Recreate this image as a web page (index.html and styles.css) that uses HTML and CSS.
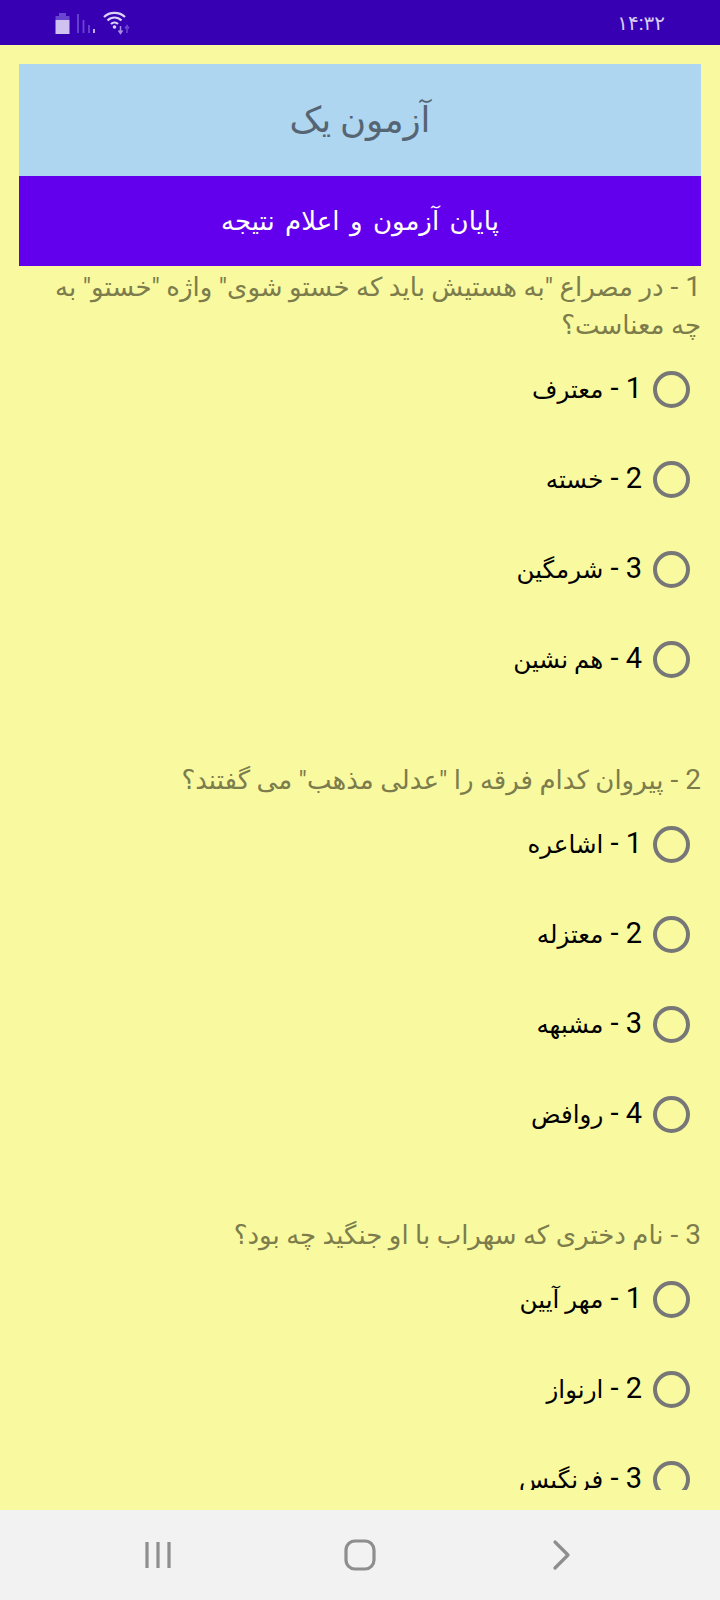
FILE: index.html
```html
<!DOCTYPE html>
<html lang="fa">
<head>
<meta charset="utf-8">
<title>آزمون یک</title>
<link rel="stylesheet" href="styles.css">
</head>
<body>
<div class="status-bar">
  <div class="status-icons">
    <svg width="15" height="21" viewBox="0 0 15 21"><rect x="4" y="0" width="7" height="3" fill="#6a45d0"/><rect x="0.500" y="3" width="14" height="4" fill="#6a45d0"/><rect x="0.500" y="7" width="14" height="14" fill="#cfc2f0"/></svg>
    <svg width="19" height="21" viewBox="0 0 19 21"><path d="M2 1V20M7.500 7V20M13 12V20" stroke="#6a45d0" stroke-width="1.800" fill="none"/><path d="M18 16V20" stroke="#cfc2f0" stroke-width="1.800" fill="none"/></svg>
    <svg class="icon-wifi" width="27" height="24" viewBox="0 0 27 24"><path d="M1 6C6.500 0.500 16.500 0.500 22 6M4.500 9.500C8.500 5.500 14.500 5.500 18.500 9.500M8 13C10 11 13 11 15 13" stroke="#dcd2f5" stroke-width="2.200" fill="none"/><circle cx="11.500" cy="16" r="1.800" fill="#dcd2f5"/><path d="M17.500 15v7M15.500 19.500l2 3 2-3" stroke="#a690e4" stroke-width="1.500" fill="none"/><path d="M24 22v-7M22 17.500l2-3 2 3" stroke="#6a45d0" stroke-width="1.500" fill="none"/></svg>
  </div>
  <span class="clock">۱۴:۳۲</span>
</div>
<main class="screen" dir="rtl">
  <div class="title">آزمون یک</div>
  <div class="finish">پایان آزمون و اعلام نتیجه</div>
  <div class="scroll">
    <section class="question">
      <p class="q-text"><span class="lat">1 - </span>در مصراع "به هستیش باید که خستو شوی" واژه "خستو" به چه معناست؟</p>
      <label class="option"><span class="radio"></span><span><span class="num">1 - </span>معترف</span></label>
      <label class="option"><span class="radio"></span><span><span class="num">2 - </span>خسته</span></label>
      <label class="option"><span class="radio"></span><span><span class="num">3 - </span>شرمگین</span></label>
      <label class="option"><span class="radio"></span><span><span class="num">4 - </span>هم نشین</span></label>
    </section>
    <section class="question">
      <p class="q-text"><span class="lat">2 - </span>پیروان کدام فرقه را "عدلی مذهب" می گفتند؟</p>
      <label class="option"><span class="radio"></span><span><span class="num">1 - </span>اشاعره</span></label>
      <label class="option"><span class="radio"></span><span><span class="num">2 - </span>معتزله</span></label>
      <label class="option"><span class="radio"></span><span><span class="num">3 - </span>مشبهه</span></label>
      <label class="option"><span class="radio"></span><span><span class="num">4 - </span>روافض</span></label>
    </section>
    <section class="question">
      <p class="q-text"><span class="lat">3 - </span>نام دختری که سهراب با او جنگید چه بود؟</p>
      <label class="option"><span class="radio"></span><span><span class="num">1 - </span>مهر آیین</span></label>
      <label class="option"><span class="radio"></span><span><span class="num">2 - </span>ارنواز</span></label>
      <label class="option"><span class="radio"></span><span><span class="num">3 - </span>فرنگیس</span></label>
    </section>
  </div>
</main>
<nav class="nav-bar">
  <svg width="26" height="30" viewBox="0 0 26 30"><path d="M2 2V28M13 2V28M24 2V28" stroke="#8e8e8e" stroke-width="3.200" fill="none"/></svg>
  <svg width="32" height="32" viewBox="0 0 32 32"><rect x="2" y="2" width="28" height="28" rx="9" stroke="#8e8e8e" stroke-width="3.200" fill="none"/></svg>
  <svg width="20" height="32" viewBox="0 0 20 32"><path d="M3 3L16 16L3 29" stroke="#8e8e8e" stroke-width="3.200" stroke-linecap="round" stroke-linejoin="round" fill="none"/></svg>
</nav>
</body>
</html>
```
FILE: styles.css
```css
* { box-sizing: border-box; }
html, body { margin: 0; padding: 0; }
body { width: 720px; height: 1600px; display: flex; flex-direction: column; font-family: Roboto, "DejaVu Sans", sans-serif; overflow: hidden; background: #f9f99f; }
.status-bar { height: 45px; flex: none; background: #3700b3; display: flex; justify-content: space-between; align-items: center; padding: 0 55px; color: #d8ccf5; }
.status-icons { display: flex; align-items: flex-start; gap: 6px; padding-top: 3px; }
.icon-wifi { margin: -2px 0 0 2px; }
.clock { font-size: 20px; }
.screen { height: 1465px; flex: none; padding: 19px 19px 20px; display: flex; flex-direction: column; }
.title { height: 112px; flex: none; background: #aed6f1; color: #566573; font-size: 35.500px; display: flex; align-items: center; justify-content: center; }
.finish { height: 90px; flex: none; background: #6200ee; color: #fff; font-size: 26px; word-spacing: 4px; display: flex; align-items: center; justify-content: center; }
.scroll { flex: 1; overflow: hidden; min-height: 0; }
.question { padding-bottom: 55px; }
.q-text { margin: 0; padding: 2px 0 0 24px; color: #7c7c4c; font-size: 26px; line-height: 38px; }
.lat { font-size: 28px; }
.option { display: flex; align-items: center; height: 90px; gap: 11px; padding-right: 11px; color: #000; font-size: 24.500px; line-height: 34px; }
.num { font-size: 29px; }
.radio { width: 37px; height: 37px; flex: none; border: 4px solid #777; border-radius: 50%; }
.nav-bar { height: 90px; flex: none; background: #f2f2f2; display: grid; grid-template-columns: repeat(3, 202px); justify-content: center; justify-items: center; align-items: center; }
```
